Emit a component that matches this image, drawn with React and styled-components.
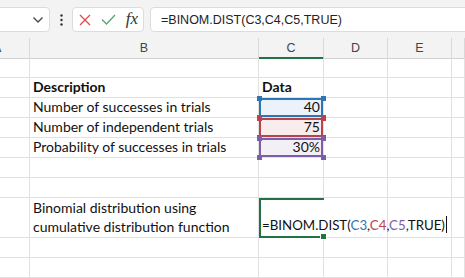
import styled, { createGlobalStyle } from "styled-components";

const Global = createGlobalStyle`
  html, body { margin: 0; padding: 0; background: #fff; overflow: hidden; }
  body { width: 465px; height: 278px; }
`;

const GRID = '#e1e1e1';
const GREEN = '#217346';

const Page = styled.div`
  width: 465px;
  height: 278px;
  overflow: hidden;
  font-family: Lato, "Liberation Sans", sans-serif;
`;

const Bar = styled.div`
  height: 38px;
  box-sizing: border-box;
  background: #f3f3f3;
  display: flex;
  align-items: flex-start;
  padding-top: 7px;
`;

const Box = styled.div`
  height: 25px;
  box-sizing: border-box;
  background: #fff;
  border: 1px solid #dcdcdc;
  border-radius: 4px;
  display: flex;
  align-items: center;
`;

const NameBox = styled(Box)`
  width: 61px;
  margin-left: -11px;
  justify-content: flex-end;
  padding-right: 5px;
`;

const Dots = styled.div`
  width: 22px;
  display: flex;
  justify-content: center;
  padding-top: 7px;
`;

const FxBox = styled(Box)`
  width: 72px;
  padding: 0 5px 0 6px;
  justify-content: space-between;
`;

const Fx = styled.span`
  font-family: "Liberation Serif", serif;
  font-style: italic;
  font-size: 17px;
  color: #333;
  margin-top: -2px;
`;

const FormulaBox = styled(Box)`
  flex: 1;
  margin-left: 6px;
  margin-right: -10px;
  padding-left: 10px;
  font-family: "Liberation Sans", sans-serif;
  font-size: 12.5px;
  color: #222;
`;

const Sheet = styled.div`
  display: grid;
  grid-template-columns: 30px 229px 65px 64px 64px 13px;
  grid-auto-rows: 20px;
`;

const Head = styled.div`
  height: 21px;
  box-sizing: border-box;
  background: #f3f3f3;
  border-right: 1px solid #d8d8d8;
  border-bottom: ${p => (p.$sel ? `2px solid ${GREEN}` : '1px solid #d0d0d0')};
  color: #444;
  font-family: "Liberation Sans", sans-serif;
  font-size: 12.5px;
  display: flex;
  align-items: center;
  justify-content: ${p => p.$left ? 'flex-start' : 'center'};
  margin-left: ${p => p.$left ? '-7px' : '0'};
`;

const Cell = styled.div`
  position: relative;
  box-sizing: border-box;
  border-right: 1px solid ${GRID};
  border-bottom: 1px solid ${GRID};
  grid-row: span ${p => p.$span || 1};
  height: ${p => (p.$span || 1) * 20}px;
  display: flex;
  flex-direction: column;
  justify-content: flex-end;
  align-items: ${p => (p.$right ? 'flex-end' : 'flex-start')};
  padding: 0 3px 1px;
  font-size: 14px;
  font-weight: ${p => (p.$bold ? 700 : 400)};
  color: #111;
  white-space: nowrap;
  line-height: 19px;
  background: ${p => p.$fill || 'transparent'};
  ${p => p.$ring && `box-shadow: inset 0 0 0 2px ${p.$ring};`}
  ${p => p.$active && `
    border: none;
    border-top: 2px solid ${GREEN};
    border-left: 2px solid ${GREEN};
    border-bottom: 2px solid ${GREEN};
    overflow: visible;
    padding-left: 1px;
    font-size: 13.3px;
    z-index: 2;
  `}
`;

const Corner = styled.span`
  position: absolute;
  width: 5px;
  height: 5px;
  background: ${p => p.$c};
  ${p => (p.$top ? 'top: -2px;' : 'bottom: -3px;')}
  ${p => (p.$lft ? 'left: -2px;' : 'right: -3px;')}
  z-index: 3;
`;

const Handle = styled.span`
  position: absolute;
  right: -3px;
  bottom: -4px;
  width: 5px;
  height: 5px;
  background: ${GREEN};
  border: 1px solid #fff;
`;

const Ref = styled.span`
  color: ${p => p.$c};
`;

const Caret = styled.span`
  display: inline-block;
  width: 1px;
  height: 17px;
  background: #111;
  vertical-align: -3px;
  margin-left: 1px;
`;

const ranges = [
  { label: 'Number of successes in trials', value: '40', c: '#2e75b6', fill: '#ebf2f9' },
  { label: 'Number of independent trials', value: '75', c: '#b8434a', fill: '#f9ecec' },
  { label: 'Probability of successes in trials', value: '30%', c: '#7b5ea7', fill: '#f3eff7' },
];

function Empty() {
  return (
    <>
      <Cell /><Cell /><Cell /><Cell /><Cell /><Cell />
    </>
  );
}

function Corners({ c }) {
  return (
    <>
      <Corner $c={c} $top $lft />
      <Corner $c={c} $top />
      <Corner $c={c} $lft />
      <Corner $c={c} />
    </>
  );
}

export default function App() {
  return (
    <Page>
      <Global />
      <Bar>
        <NameBox>
          <svg width="12" height="8" viewBox="0 0 12 8">
            <path d="M1.5 1.5 L6 6 L10.5 1.5" fill="none" stroke="#444" strokeWidth="1.3" />
          </svg>
        </NameBox>
        <Dots>
          <svg width="3" height="12" viewBox="0 0 3 12">
            <circle cx="1.5" cy="1.5" r="1.2" fill="#333" />
            <circle cx="1.5" cy="6" r="1.2" fill="#333" />
            <circle cx="1.5" cy="10.5" r="1.2" fill="#333" />
          </svg>
        </Dots>
        <FxBox>
          <svg width="12" height="12" viewBox="0 0 12 12">
            <path d="M1 1 L11 11 M11 1 L1 11" stroke="#e0474c" strokeWidth="1.3" />
          </svg>
          <svg width="15" height="11" viewBox="0 0 15 11">
            <path d="M1 5.5 L5.5 10 L14 1" fill="none" stroke="#56a56e" strokeWidth="1.3" />
          </svg>
          <Fx>fx</Fx>
        </FxBox>
        <FormulaBox>=BINOM.DIST(C3,C4,C5,TRUE)</FormulaBox>
      </Bar>
      <Sheet>
        <Head $left>A</Head>
        <Head>B</Head>
        <Head $sel>C</Head>
        <Head>D</Head>
        <Head>E</Head>
        <Head />

        <Empty />

        <Cell /><Cell $bold>Description</Cell><Cell $bold>Data</Cell><Cell /><Cell /><Cell />

        {ranges.map(r => (
          <Row key={r.label} r={r} />
        ))}

        <Empty />
        <Empty />

        <Cell $span={2} />
        <Cell $span={2}>
          <div>Binomial distribution using</div>
          <div>cumulative distribution function</div>
        </Cell>
        <Cell $span={2} $active>
          <div>
            =BINOM.DIST(<Ref $c="#2e75b6">C3</Ref>,<Ref $c="#b8434a">C4</Ref>,<Ref $c="#7b5ea7">C5</Ref>,TRUE)<Caret />
          </div>
          <Handle />
        </Cell>
        <Cell $span={2} /><Cell $span={2} /><Cell $span={2} />

        <Empty />
        <Empty />
      </Sheet>
    </Page>
  );
}

function Row({ r }) {
  return (
    <>
      <Cell />
      <Cell>{r.label}</Cell>
      <Cell $right $fill={r.fill} $ring={r.c}>
        {r.value}
        <Corners c={r.c} />
      </Cell>
      <Cell /><Cell /><Cell />
    </>
  );
}
